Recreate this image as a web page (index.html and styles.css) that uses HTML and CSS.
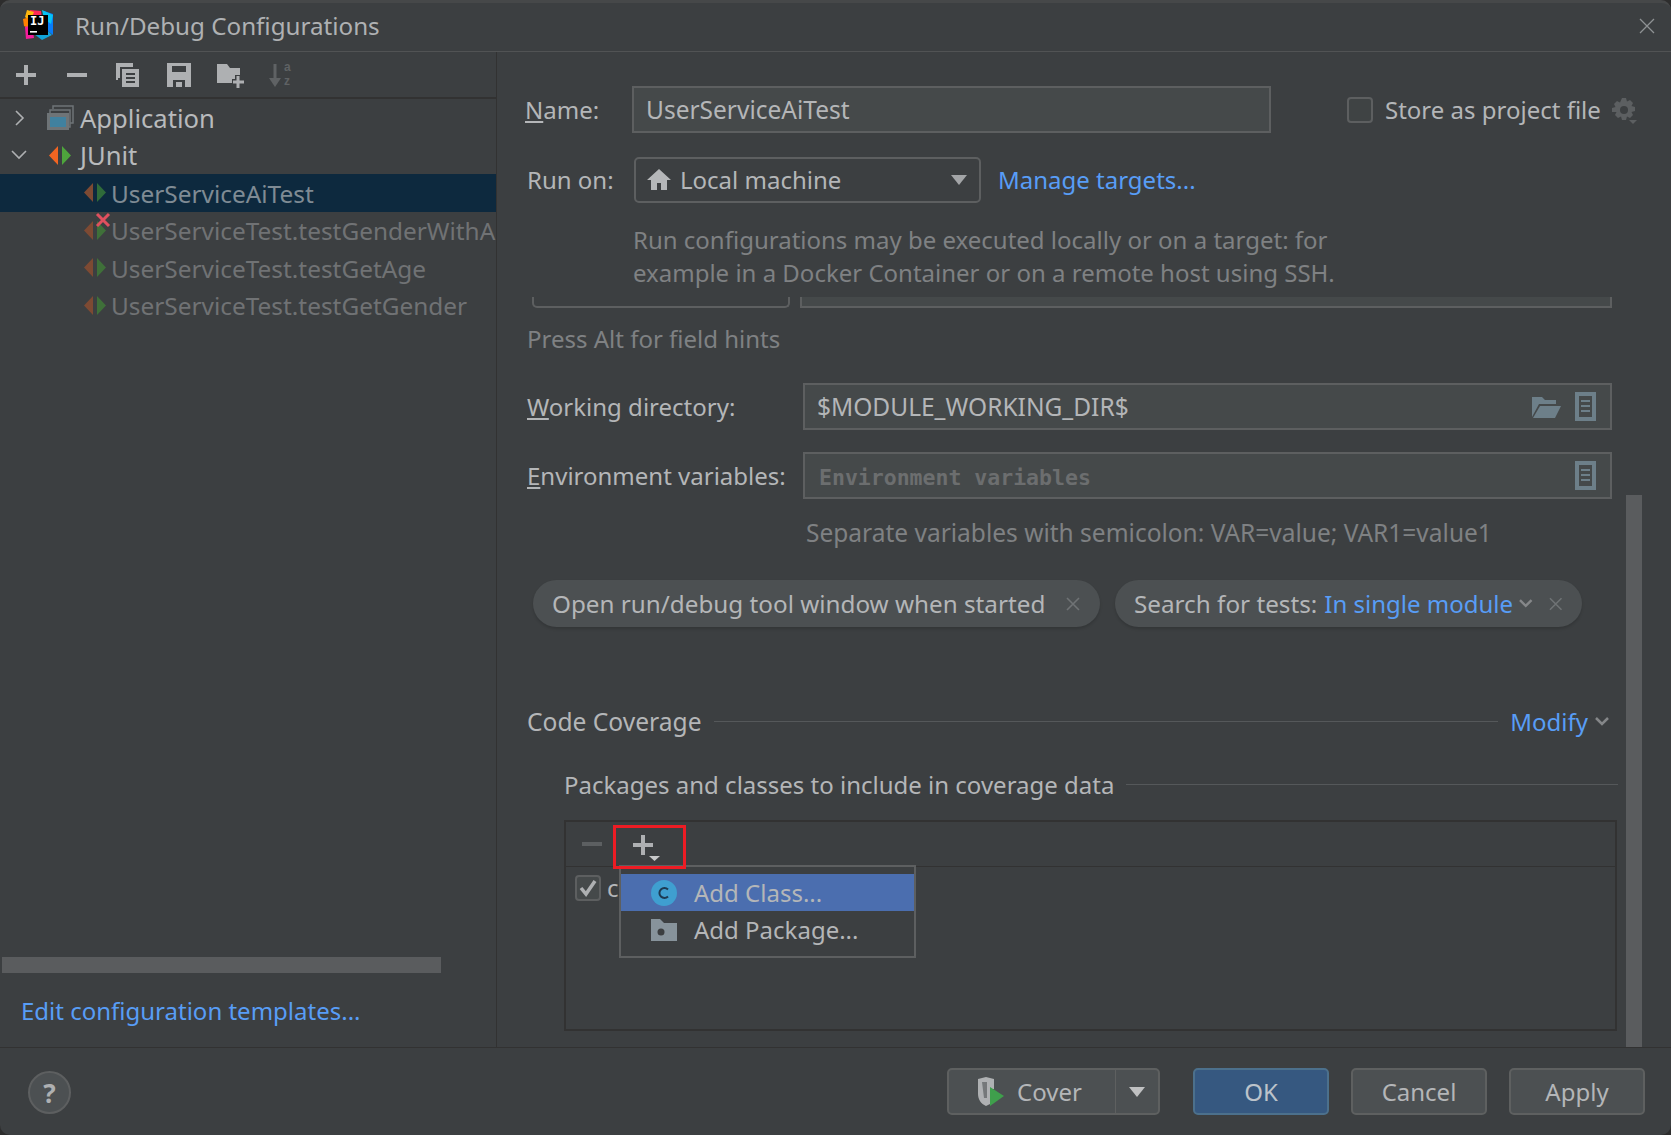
FILE: index.html
```html
<!DOCTYPE html>
<html lang="en">
<head>
<meta charset="utf-8">
<title>Run/Debug Configurations</title>
<link rel="stylesheet" href="styles.css">
</head>
<body>
<div class="window">
  <header class="titlebar">
    <svg class="logo" width="32" height="32" viewBox="0 0 32 32">
      <polygon points="8,1 19,2 20,12 6,14" fill="#fe2857"/>
      <polygon points="5,1 12,3 8,12 3,8" fill="#fdb60d"/>
      <polygon points="1,10 8,8 8,20 2,17" fill="#ff8100"/>
      <polygon points="3,18 10,16 12,29 4,30" fill="#f41d9b"/>
      <polygon points="22,2 31,5 31,26 22,19" fill="#087cfa"/>
      <polygon points="20,1 31,6 29,15 22,10" fill="#07c3f2"/>
      <polygon points="12,25 24,20 30,26 20,31" fill="#11a3d8"/>
      <rect x="6" y="6" width="20" height="20" fill="#000"/>
      <text class="logo-text" x="8" y="16">IJ</text>
      <rect x="8" y="22" width="7" height="1.6" fill="#fff"/>
    </svg>
    <span class="title">Run/Debug Configurations</span>
    <svg class="close" width="16" height="16" viewBox="0 0 16 16"><path d="M1 1l14 14M15 1L1 15" stroke="#8f9294" stroke-width="1.3" fill="none"/></svg>
  </header>

  <main class="main">
    <aside class="side">
      <div class="side-tools">
        <button class="tool"><svg width="22" height="22" viewBox="0 0 22 22"><path d="M11 1v20M1 11h20" stroke="#aeb0b2" stroke-width="4"/></svg></button>
        <button class="tool"><svg width="22" height="22" viewBox="0 0 22 22"><path d="M1 11h20" stroke="#aeb0b2" stroke-width="4"/></svg></button>
        <button class="tool"><svg width="26" height="26" viewBox="0 0 26 26"><path d="M2 18V2h16M4 16V4h14" stroke="#aeb0b2" stroke-width="2" fill="none"/><path d="M7 7h17v18H7z" fill="#aeb0b2"/><path d="M11 12h9M11 16h9M11 20h9" stroke="#3c3f41" stroke-width="2"/></svg></button>
        <button class="tool"><svg width="26" height="26" viewBox="0 0 26 26"><path d="M1 1h24v24H1z" fill="#aeb0b2"/><path d="M6 4h14v6H6zM7 18h12v7H7z" fill="#3c3f41"/><path d="M10 20h6v5h-6z" fill="#aeb0b2"/></svg></button>
        <button class="tool shift"><svg width="28" height="26" viewBox="0 0 28 26"><path d="M0 2h10l3 4h10v15H0z" fill="#aeb0b2"/><path d="M21 13v13M15 20h13" stroke="#3c3f41" stroke-width="6"/><path d="M21 14v12M16 20h11" stroke="#aeb0b2" stroke-width="3"/></svg></button>
        <button class="tool shift"><svg width="26" height="30" viewBox="0 0 26 30"><path d="M6 4v18" stroke="#5f6264" stroke-width="3" fill="none"/><path d="M0 18h12l-6 9z" fill="#5f6264"/><text class="sort-text" x="15" y="11">a</text><text class="sort-text" x="15" y="25">z</text></svg></button>
      </div>
      <div class="tree">
        <div class="row top">
          <svg class="chev" width="10" height="16" viewBox="0 0 10 16"><path d="M1 1l7 7-7 7" stroke="#aeb0b2" stroke-width="1.6" fill="none"/></svg>
          <svg class="ico-app" width="28" height="26" viewBox="0 0 28 26"><path d="M7 4V1h20v17h-3" stroke="#6e7477" stroke-width="1.5" fill="none"/><path d="M4 8V5h20v17h-3" stroke="#6e7477" stroke-width="1.5" fill="none"/><rect x="1" y="8" width="22" height="17" fill="#6e7477"/><rect x="4" y="12" width="16" height="10" fill="#40819f"/></svg>
          <span class="label">Application</span>
        </div>
        <div class="row top">
          <svg class="chev down" width="16" height="10" viewBox="0 0 16 10"><path d="M1 1l7 7 7-7" stroke="#aeb0b2" stroke-width="1.6" fill="none"/></svg>
          <svg class="ico-junit" width="23" height="19" viewBox="0 0 23 19"><path d="M0 9.500L9 0v19z" fill="#f26522"/><path d="M13 0l9 9.500-9 9.500z" fill="#4ea53c"/></svg>
          <span class="label">JUnit</span>
        </div>
        <div class="row child selected">
          <svg class="ico-test" width="23" height="19" viewBox="0 0 23 19"><path d="M0 9.500L9 0v19z" fill="#7d4a33"/><path d="M13 0l9 9.500-9 9.500z" fill="#2f6b3a"/></svg>
          <span class="label dim-sel">UserServiceAiTest</span>
        </div>
        <div class="row child">
          <svg class="ico-test" width="23" height="19" viewBox="0 0 23 19"><path d="M0 9.500L9 0v19z" fill="#7d4a33"/><path d="M13 0l9 9.500-9 9.500z" fill="#3f7039"/><path d="M13-7L25 5M25-7L13 5" stroke="#e0505f" stroke-width="3"/></svg>
          <span class="label dim">UserServiceTest.testGenderWithA</span>
        </div>
        <div class="row child">
          <svg class="ico-test" width="23" height="19" viewBox="0 0 23 19"><path d="M0 9.500L9 0v19z" fill="#7d4a33"/><path d="M13 0l9 9.500-9 9.500z" fill="#3f7039"/></svg>
          <span class="label dim">UserServiceTest.testGetAge</span>
        </div>
        <div class="row child">
          <svg class="ico-test" width="23" height="19" viewBox="0 0 23 19"><path d="M0 9.500L9 0v19z" fill="#7d4a33"/><path d="M13 0l9 9.500-9 9.500z" fill="#3f7039"/></svg>
          <span class="label dim">UserServiceTest.testGetGender</span>
        </div>
      </div>
      <div class="hscroll"></div>
      <a class="link templates">Edit configuration templates...</a>
    </aside>

    <section class="form">
      <div class="f-row name-row">
        <label class="f-label name-label"><u>N</u>ame:</label>
        <div class="field name-field">UserServiceAiTest</div>
        <span class="check"></span>
        <span class="store">Store as project file</span>
        <svg class="gear" width="28" height="28" viewBox="0 0 28 28"><path d="M12 1h4l1 3.500 3-1.500 3 3-1.500 3 3.500 1v4l-3.500 1 1.500 3-3 3-3-1.500-1 3.500h-4l-1-3.500-3 1.500-3-3 1.500-3L2 15v-4l3.500-1L4 7l3-3 3 1.500z" fill="#5c5f61"/><circle cx="14" cy="13" r="4" fill="#3c3f41"/><path d="M19 23h8l-4 4z" fill="#5c5f61"/></svg>
      </div>
      <div class="f-row run-row">
        <label class="f-label run-label">Run on:</label>
        <div class="combo">
          <svg width="24" height="22" viewBox="0 0 24 22"><path d="M12 0L0 11h4v10h6v-7h4v7h6V11h4z" fill="#b5b7b9"/></svg>
          <span class="combo-text">Local machine</span>
          <span class="tri"></span>
        </div>
        <a class="link manage">Manage targets...</a>
      </div>
      <p class="help">Run configurations may be executed locally or on a target: for<br>example in a Docker Container or on a remote host using SSH.</p>
      <div class="clipped">
        <div class="clip-left"></div>
        <div class="clip-right"></div>
      </div>
      <p class="hint">Press Alt for field hints</p>
      <div class="f-row work-row">
        <label class="f-label wide"><u>W</u>orking directory:</label>
        <div class="field wide-field">
          <span class="grow">$MODULE_WORKING_DIR$</span>
          <svg width="29" height="24" viewBox="0 0 29 24"><path d="M0 2h10l3 3h11v4H7L0 22z" fill="#6d7f89"/><path d="M8 11h21l-6 12H1z" fill="#6d7f89"/></svg>
          <svg class="doc" width="21" height="29" viewBox="0 0 21 29"><path d="M0 0h21v29H0z" fill="#6d7f89"/><path d="M4 4h13v21H4z" fill="#45494a"/><path d="M6 9h9M6 14h9M6 19h9" stroke="#6d7f89" stroke-width="2"/></svg>
        </div>
      </div>
      <div class="f-row env-row">
        <label class="f-label wide"><u>E</u>nvironment variables:</label>
        <div class="field wide-field">
          <span class="grow mono">Environment variables</span>
          <svg class="doc" width="21" height="29" viewBox="0 0 21 29"><path d="M0 0h21v29H0z" fill="#6d7f89"/><path d="M4 4h13v21H4z" fill="#45494a"/><path d="M6 9h9M6 14h9M6 19h9" stroke="#6d7f89" stroke-width="2"/></svg>
        </div>
      </div>
      <p class="sep-help">Separate variables with semicolon: VAR=value; VAR1=value1</p>
      <div class="chips">
        <div class="chip chip-a">
          <span>Open run/debug tool window when started</span>
          <svg class="chip-x" width="16" height="16" viewBox="0 0 16 16"><path d="M2 2l12 12M14 2L2 14" stroke="#6f7375" stroke-width="1.6"/></svg>
        </div>
        <div class="chip chip-b">
          <span>Search for tests:</span>
          <a class="link chip-link">In single module</a>
          <svg class="chip-v" width="14" height="9" viewBox="0 0 14 9"><path d="M1 1l6 6 6-6" stroke="#858789" stroke-width="2.500" fill="none"/></svg>
          <svg class="chip-x b" width="16" height="16" viewBox="0 0 16 16"><path d="M2 2l12 12M14 2L2 14" stroke="#6f7375" stroke-width="1.6"/></svg>
        </div>
      </div>
      <div class="section cov">
        <span class="cov-title">Code Coverage</span>
        <span class="line"></span>
        <a class="link">Modify</a>
        <svg width="14" height="9" viewBox="0 0 14 9"><path d="M1 1l6 6 6-6" stroke="#858789" stroke-width="2.500" fill="none"/></svg>
      </div>
      <div class="section pkg">
        <span>Packages and classes to include in coverage data</span>
        <span class="line"></span>
      </div>
      <div class="table">
        <div class="table-tools">
          <svg class="t-minus" width="20" height="4" viewBox="0 0 20 4"><path d="M0 2h20" stroke="#5c5f61" stroke-width="4"/></svg>
          <svg class="t-plus" width="30" height="28" viewBox="0 0 30 28"><path d="M10 1v20M0 11h20" stroke="#aeb0b2" stroke-width="4"/><path d="M16 22h11l-5.500 5z" fill="#c8c9ca"/></svg>
        </div>
        <div class="table-row">
          <span class="check checked"><svg width="20" height="18" viewBox="0 0 20 18"><path d="M3 9l5 6 9-13" stroke="#aeb0b2" stroke-width="3.500" fill="none"/></svg></span>
          <span class="cell">c</span>
        </div>
        <div class="red-box"></div>
        <div class="popup">
          <div class="pop-item active">
            <svg width="26" height="26" viewBox="0 0 26 26"><circle cx="13" cy="13" r="13" fill="#3f9fd0"/><path d="M17 9.500a5 5 0 1 0 0 7" stroke="#1d3a52" stroke-width="2" fill="none"/></svg>
            <span>Add Class...</span>
          </div>
          <div class="pop-item">
            <svg width="26" height="22" viewBox="0 0 26 22"><path d="M0 0h9l4 4h13v18H0z" fill="#87939b"/><circle cx="10" cy="13" r="3.500" fill="#3c3f41"/></svg>
            <span>Add Package...</span>
          </div>
        </div>
      </div>
      <div class="vscroll"></div>
    </section>
  </main>

  <footer class="footer">
    <button class="help-btn">?</button>
    <div class="split">
      <div class="split-main">
        <svg width="32" height="32" viewBox="0 0 32 32"><path d="M3 3l8-2 8 2v10l-4 0v15l-4 2c-5-2-8-7-8-12z" fill="#afb1b3"/><path d="M7 6h5v16H9z" fill="#3c3f41" opacity=".5"/><path d="M15 11l14 9-14 10z" fill="#3f9f4c"/></svg>
        <span>Cover</span>
      </div>
      <div class="split-drop"><span class="tri light"></span></div>
    </div>
    <button class="btn primary">OK</button>
    <button class="btn">Cancel</button>
    <button class="btn">Apply</button>
  </footer>
</div>
</body>
</html>
```

FILE: styles.css
```css
* { box-sizing: border-box; }
html, body { margin: 0; padding: 0; background: #2d2d2d; }
body {
  width: 1671px;
  height: 1135px;
  overflow: hidden;
  font-family: "Noto Sans", "Open Sans", sans-serif;
  font-size: 24px;
  color: #b4b6b8;
}
.window {
  position: relative;
  width: 1671px;
  height: 1135px;
  background: #3c3f41;
  border-top: 3px solid #464849;
  border-radius: 10px 10px 10px 10px;
  display: flex;
  flex-direction: column;
  overflow: hidden;
}
.titlebar {
  height: 49px;
  flex: none;
  display: flex;
  align-items: center;
  padding-left: 22px;
  border-bottom: 1px solid #515354;
}
.logo { flex: none; margin-bottom: 4px; }
.logo-text { font: bold 12px "DejaVu Sans Mono", monospace; fill: #fff; }
.title { margin-left: 21px; margin-bottom: 3px; color: #afb1b3; font-size: 24.200px; }
.close { margin-left: auto; margin-right: 16px; margin-bottom: 2px; }

.main { flex: 1; display: flex; min-height: 0; border-bottom: 1px solid #323232; }

.side {
  width: 497px;
  flex: none;
  border-right: 1px solid #323232;
  display: flex;
  flex-direction: column;
}
.side-tools {
  height: 47px;
  flex: none;
  display: flex;
  align-items: center;
  border-bottom: 2px solid #323232;
  padding-top: 1px;
}
.tool {
  width: 51px;
  height: 30px;
  padding: 0;
  border: 0;
  background: none;
  display: flex;
  align-items: center;
  justify-content: center;
}
.tool.shift svg { margin-left: 3px; }
.tree { flex: none; }
.row {
  position: relative;
  height: 37.500px;
  display: flex;
  align-items: center;
  overflow: hidden;
  white-space: nowrap;
  font-size: 24.400px;
}
.row.top { font-size: 25.600px; }
.chev { position: absolute; left: 15px; }
.chev.down { left: 11px; }
.ico-app { position: absolute; left: 46px; top: 6px; }
.ico-junit { position: absolute; left: 49px; top: 9px; }
.ico-test { position: absolute; left: 84px; top: 9px; overflow: visible; }
.label { margin: 1px 0 0 80px; color: #b8babc; }
.child .label { margin-left: 111px; }
.selected { background: #0d293e; }
.dim-sel { color: #7f8b94 !important; }
.dim { color: #707274 !important; }
.hscroll {
  position: absolute;
  left: 2px;
  top: 954px;
  width: 439px;
  height: 16px;
  background: #5a5c5e;
}
.templates {
  position: absolute;
  left: 21px;
  top: 991px;
}
.link { color: #589df6; }

.form {
  position: relative;
  flex: 1;
  min-width: 0;
  display: flex;
  flex-direction: column;
  padding-left: 30px;
}
.f-row { display: flex; align-items: center; flex: none; }
.name-row { margin-top: 34px; height: 47px; }
.f-label { color: #b4b6b8; width: 105px; flex: none; }
.f-label.name-label { margin-left: -2px; width: 107px; }
.f-label.run-label { width: 107px; }
.f-label.wide { width: 277px; }
.field {
  height: 47px;
  background: #45494a;
  border: 2px solid #5d5f60;
  display: flex;
  align-items: center;
  padding-left: 12px;
  color: #b4b6b8;
  font-size: 24.500px;
}
.name-field { width: 639px; }
.check {
  width: 26px;
  height: 26px;
  flex: none;
  border: 2px solid #5d5f60;
  border-radius: 4px;
  background: #3f4344;
  display: flex;
  align-items: center;
  justify-content: center;
}
.name-row .check { margin-left: 76px; }
.store { margin-left: 12px; }
.gear { margin-left: 9px; margin-top: 2px; }
.run-row { margin-top: 24px; height: 46px; }
.run-row .combo-text, .run-row .f-label, .run-row .manage { margin-bottom: 2px; }
.combo {
  width: 347px;
  height: 46px;
  border: 2px solid #5d5f60;
  border-radius: 5px;
  display: flex;
  align-items: center;
  padding-left: 11px;
  background: #3c3f41;
}
.combo-text { margin-left: 9px; }
.tri {
  width: 0;
  height: 0;
  border-left: 8px solid transparent;
  border-right: 8px solid transparent;
  border-top: 10px solid #a3a5a7;
  margin-left: auto;
  margin-right: 12px;
}
.manage { margin-left: 17px; }
.help {
  margin: 20px 0 0 106px;
  line-height: 33px;
  height: 66px;
  color: #7f8183;
  white-space: nowrap;
}
.clipped { flex: none; height: 11px; margin-top: 8px; display: flex; gap: 10px; padding-left: 5px; }
.clip-left {
  width: 258px;
  border: 2px solid #5d5f60;
  border-top: 0;
  border-radius: 0 0 5px 5px;
}
.clip-right {
  width: 812px;
  background: #45494a;
  border: 2px solid #5d5f60;
  border-top: 0;
}
.hint { margin: 14px 0 0; line-height: 33px; height: 33px; color: #7f8183; }
.work-row { margin-top: 28px; height: 47px; }
.env-row { margin-top: 22px; height: 47px; }
.wide-field { width: 809px; padding-right: 14px; gap: 14px; margin-left: -1px; }
.grow { flex: 1; }
.mono { font: bold 21.500px "DejaVu Sans Mono", monospace; color: #6c6e6f; margin: 3px 0 0 2px; }
.sep-help { margin: 17px 0 0 279px; line-height: 33px; height: 33px; color: #7f8183; white-space: nowrap; font-size: 24.500px; }
.chips { display: flex; gap: 15px; margin: 31px 0 0 6px; flex: none; }
.chip {
  height: 47px;
  border-radius: 24px;
  background: #4c5052;
  box-shadow: 0 2px 3px rgba(0,0,0,.15);
  display: flex;
  align-items: center;
  padding-left: 19px;
  color: #b4b6b8;
  font-size: 24.250px;
  white-space: nowrap;
}
.chip-a { width: 567px; }
.chip-b { width: 467px; }
.chip-x { margin-left: auto; margin-right: 19px; }
.chip-link { margin-left: 7px; font-size: 24px; }
.chip-v { margin-left: 6px; }
.chip-x.b { margin-left: 15px; }
.section { display: flex; align-items: center; flex: none; height: 33px; white-space: nowrap; }
.cov { margin-top: 78px; padding-right: 32px; width: 1114px; }
.cov-title { font-size: 24.600px; }
.line { flex: 1; height: 1px; background: #55585a; margin: 0 12px; }
.cov svg { margin-left: 7px; }
.pkg { margin: 30px 0 0 37px; width: 1054px; }
.pkg .line { margin-right: 0; }
.table {
  position: relative;
  flex: none;
  width: 1053px;
  height: 211px;
  margin: 19px 0 0 37px;
  border: 2px solid #323232;
}
.table-tools {
  height: 45px;
  border-bottom: 1px solid #323232;
  display: flex;
  align-items: center;
  padding-left: 16px;
}
.t-minus { flex: none; }
.t-plus { flex: none; margin: 8px 0 0 31px; }
.table-row { display: flex; align-items: center; padding: 4px 0 0 9px; }
.checked { background: #45494a; }
.cell { margin-left: 6px; color: #b4b6b8; }
.red-box {
  position: absolute;
  left: 47px;
  top: 3px;
  width: 73px;
  height: 44px;
  border: 3px solid #ed1c24;
  z-index: 3;
}
.popup {
  position: absolute;
  left: 53px;
  top: 43px;
  width: 297px;
  height: 93px;
  background: #3c3f41;
  border: 2px solid #5d5f60;
  padding-top: 7px;
  z-index: 2;
}
.pop-item {
  height: 37px;
  display: flex;
  align-items: center;
  padding-left: 30px;
  gap: 17px;
  color: #b4b6b8;
}
.pop-item.active { background: #4b6eaf; }
.vscroll {
  position: absolute;
  left: 1129px;
  top: 443px;
  width: 16px;
  bottom: 0;
  background: #5a5c5e;
}

.footer {
  position: relative;
  height: 87px;
  flex: none;
  display: flex;
  align-items: center;
  justify-content: flex-end;
  gap: 22px;
  padding: 0 26px 0 0;
}
.help-btn {
  position: absolute;
  left: 28px;
  top: 23px;
  width: 43px;
  height: 43px;
  border-radius: 50%;
  background: #4c5052;
  border: 2px solid #5d5f60;
  padding: 0;
  font: bold 26px "Noto Sans", sans-serif;
  color: #aeb0b2;
}
.btn {
  width: 136px;
  height: 47px;
  border: 2px solid #5e6060;
  border-radius: 5px;
  background: #4c5052;
  color: #b4b6b8;
  font: 24px "Noto Sans", sans-serif;
  padding: 0;
}
.btn.primary { background: #365880; border-color: #4c708c; color: #bcc3ca; }
.split {
  width: 213px;
  height: 47px;
  border: 2px solid #5e6060;
  border-radius: 5px;
  background: #4c5052;
  display: flex;
  margin-right: 11px;
}
.split-main {
  flex: 1;
  display: flex;
  align-items: center;
  padding-left: 26px;
  gap: 10px;
  border-right: 1px solid #5e6060;
}
.split-drop { width: 42px; display: flex; align-items: center; justify-content: center; }
.tri.light { margin: 0; border-top-color: #c0c1c2; }
.sort-text { font: bold 12px "Liberation Sans", sans-serif; fill: #5f6264; }
```
